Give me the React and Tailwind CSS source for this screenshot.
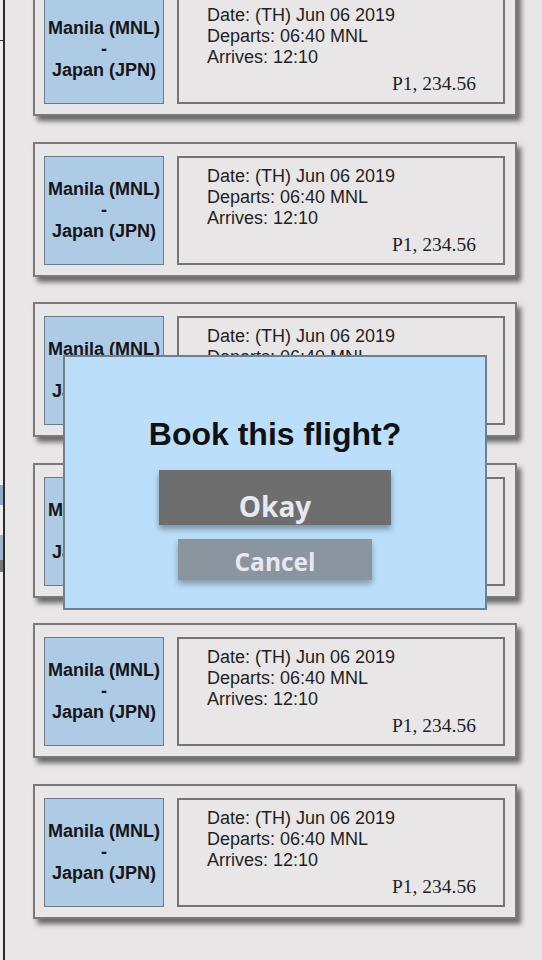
import React from "react";

const flights = [1, 2, 3, 4, 5, 6].map((id) => ({
  id,
  from: "Manila (MNL)",
  to: "Japan (JPN)",
  date: "(TH) Jun 06 2019",
  departs: "06:40 MNL",
  arrives: "12:10",
  price: "P1, 234.56",
}));

const FlightCard = ({ flight }) => (
  <div className="flex gap-[13px] w-[484px] h-[135px] shrink-0 border-2 border-[#7a7a7a] bg-[#e8e6e6] pl-[9px] pr-[10px] pt-[12px] pb-[10px] shadow-[4px_5px_5px_rgba(0,0,0,0.55)]">
    <div className="w-[120px] shrink-0 flex flex-col items-center justify-center border border-[#6f7a84] bg-[#aecbe6] text-[18px] font-bold leading-[21px] text-[#151515] font-['Liberation_Sans',Arial,sans-serif]">
      <span>{flight.from}</span>
      <span>-</span>
      <span>{flight.to}</span>
    </div>
    <div className="flex-1 flex flex-col border-2 border-[#747474] pl-[28px] pr-[27px] pt-[8px] text-[#1f1f1f]">
      <div className="text-[18px] leading-[21px] font-['Liberation_Sans',Arial,sans-serif]">
        <p>Date: {flight.date}</p>
        <p>Departs: {flight.departs}</p>
        <p>Arrives: {flight.arrives}</p>
      </div>
      <p className="mt-[5px] text-right text-[19.5px] leading-[22px] font-['Liberation_Serif','Times_New_Roman',serif]">
        {flight.price}
      </p>
    </div>
  </div>
);

export default function App() {
  return (
    <div className="relative flex h-[960px] w-[542px] overflow-hidden bg-[#e8e6e6]">
      {/* sliver of the neighbouring panel */}
      <div className="w-[5px] shrink-0 flex flex-col border-r-2 border-[#2a2a2a] bg-[#ededed]">
        <div className="h-[40px]" />
        <div className="h-[1px] bg-[#333]" />
        <div className="h-[444px]" />
        <div className="h-[20px] bg-[#8fa9c7]" />
        <div className="h-[30px]" />
        <div className="h-[25px] bg-[#9db4cf]" />
        <div className="h-[12px] bg-[#777]" />
      </div>

      <div className="flex-1 flex flex-col gap-[25.5px] pl-[28px] mt-[-19px]">
        {flights.map((f) => (
          <FlightCard key={f.id} flight={f} />
        ))}
      </div>

      {/* confirm dialog */}
      <div className="absolute left-[63px] top-[355px] w-[424px] h-[255px] flex flex-col items-center border-2 border-[#6e7f8e] bg-[#bbdefa]">
        <h2 className="mt-[59px] text-[32px] leading-[36px] font-bold text-[#111] font-['Liberation_Sans',Arial,sans-serif]">
          Book this flight?
        </h2>
        <button className="mt-[18px] w-[232px] h-[55px] bg-[#6e6e6e] text-[28px] leading-[36px] font-bold text-[#e8e8f0] font-['Open_Sans','Noto_Sans',sans-serif] shadow-[0_4px_6px_rgba(0,0,0,0.35)] pt-[16px]">
          Okay
        </button>
        <button className="mt-[14px] w-[194px] h-[41px] bg-[#8a95a0] text-[24.5px] leading-[30px] font-bold text-[#e8e8f0] font-['Open_Sans','Noto_Sans',sans-serif] shadow-[0_4px_6px_rgba(0,0,0,0.3)] pt-[4px]">
          Cancel
        </button>
      </div>
    </div>
  );
}
